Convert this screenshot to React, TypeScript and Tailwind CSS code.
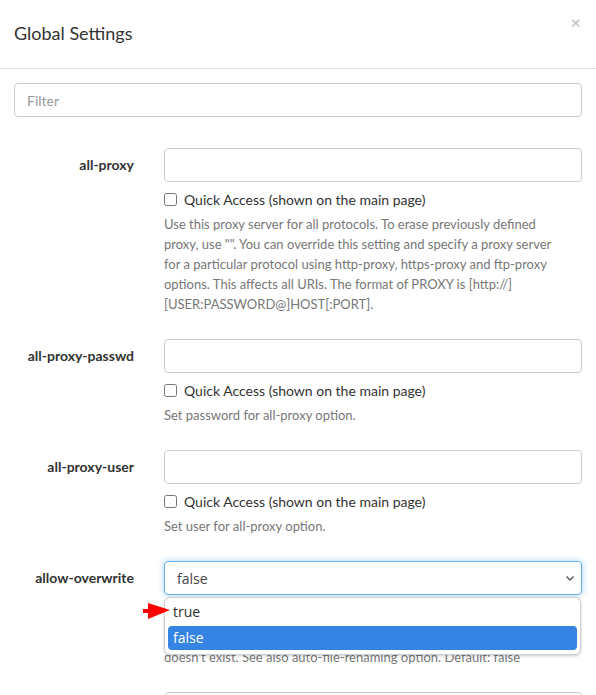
import React from 'react'

type Setting = {
  name: string
  desc: string[]
}

const settings: Setting[] = [
  {
    name: 'all-proxy',
    desc: [
      'Use this proxy server for all protocols. To erase previously defined',
      'proxy, use "". You can override this setting and specify a proxy server',
      'for a particular protocol using http-proxy, https-proxy and ftp-proxy',
      'options. This affects all URIs. The format of PROXY is [http://]',
      '[USER:PASSWORD@]HOST[:PORT].',
    ],
  },
  { name: 'all-proxy-passwd', desc: ['Set password for all-proxy option.'] },
  { name: 'all-proxy-user', desc: ['Set user for all-proxy option.'] },
]

function QuickAccess() {
  return (
    <label className="mt-[7px] flex h-[20px] items-center gap-[7px] text-[14px] text-[#333]">
      <input type="checkbox" className="m-0 h-[13px] w-[13px]" />
      Quick Access (shown on the main page)
    </label>
  )
}

function Description({ lines }: { lines: string[] }) {
  return (
    <div className="mt-[5px] text-[13px] leading-[20px] text-[#777]">
      {lines.map((l, i) => (
        <div key={i} className="whitespace-nowrap">{l}</div>
      ))}
    </div>
  )
}

export default function App() {
  return (
    <div className="h-[695px] w-[596px] overflow-hidden bg-white font-['Lato',sans-serif]">
      {/* header */}
      <div className="flex h-[69px] items-start justify-between border-b border-[#e5e5e5] px-[14px]">
        <h4 className="mt-[21px] text-[18px] leading-[24px] text-[#333]">Global Settings</h4>
        <span className="mt-[10px] mr-[1px] text-[18px] leading-[24px] text-[#bbb]">×</span>
      </div>

      <div className="px-[14px] pt-[14px]">
        <input
          placeholder="Filter"
          className="h-[34px] w-full rounded-[4px] border border-[#ccc] px-[12px] text-[14px] text-[#555] placeholder:text-[#999] focus:outline-none"
        />

        <div className="mt-[31px] flex flex-col gap-[25px]">
          {settings.map(s => (
            <div key={s.name} className="flex">
              <div className="w-[120px] whitespace-nowrap text-right text-[14px] font-bold leading-[34px] text-[#333]">{s.name}</div>
              <div className="ml-[30px] flex-1">
                <input className="h-[34px] w-full rounded-[4px] border border-[#ccc] px-[12px] text-[14px] focus:outline-none" />
                <QuickAccess />
                <Description lines={s.desc} />
              </div>
            </div>
          ))}

          <div className="flex">
            <div className="w-[120px] whitespace-nowrap text-right text-[14px] font-bold leading-[34px] text-[#333]">allow-overwrite</div>
            <div className="relative ml-[30px] flex-1">
              <div className="flex h-[34px] w-full items-center justify-between rounded-[4px] border border-[#66afe9] pl-[12px] pr-[5px] text-[14px] text-[#444] shadow-[0_0_6px_rgba(102,175,233,0.6)]">
                <span className="font-['Open_Sans',sans-serif]">false</span>
                <svg width="12" height="12" viewBox="0 0 12 12" className="text-[#555]">
                  <path d="M2.5 4.5 L6 8 L9.5 4.5" fill="none" stroke="currentColor" strokeWidth="1.4" />
                </svg>
              </div>
              <QuickAccess />
              <Description
                lines={[
                  'Restart download from scratch if the corresponding control file',
                  "doesn't exist. See also auto-file-renaming option. Default: false",
                ]}
              />

              {/* open dropdown */}
              <div className="absolute left-0 right-[1px] top-[36px] h-[58px] rounded-[6px] border border-[#cfcfcf] bg-white px-[3px] font-['Open_Sans',sans-serif] text-[14px] shadow-[0_1px_3px_rgba(0,0,0,0.2)]">
                <div className="h-[28px] pl-[5px] leading-[28px] text-[#2e2e2e]">true</div>
                <div className="h-[24px] rounded-[4px] bg-[#3584e4] pl-[5px] leading-[24px] text-white">false</div>
              </div>

              {/* red arrow */}
              <svg width="28" height="18" viewBox="0 0 28 18" className="absolute left-[-21px] top-[41px]">
                <rect x="0" y="7" width="7" height="4" fill="#ff0000" />
                <polygon points="5,1 27,8 5,17" fill="#ff0000" />
              </svg>
            </div>
          </div>

          <div className="flex">
            <div className="w-[120px]" />
            <div className="ml-[30px] flex-1">
              <input className="h-[34px] w-full rounded-[4px] border border-[#ccc]" />
            </div>
          </div>
        </div>
      </div>
    </div>
  )
}
